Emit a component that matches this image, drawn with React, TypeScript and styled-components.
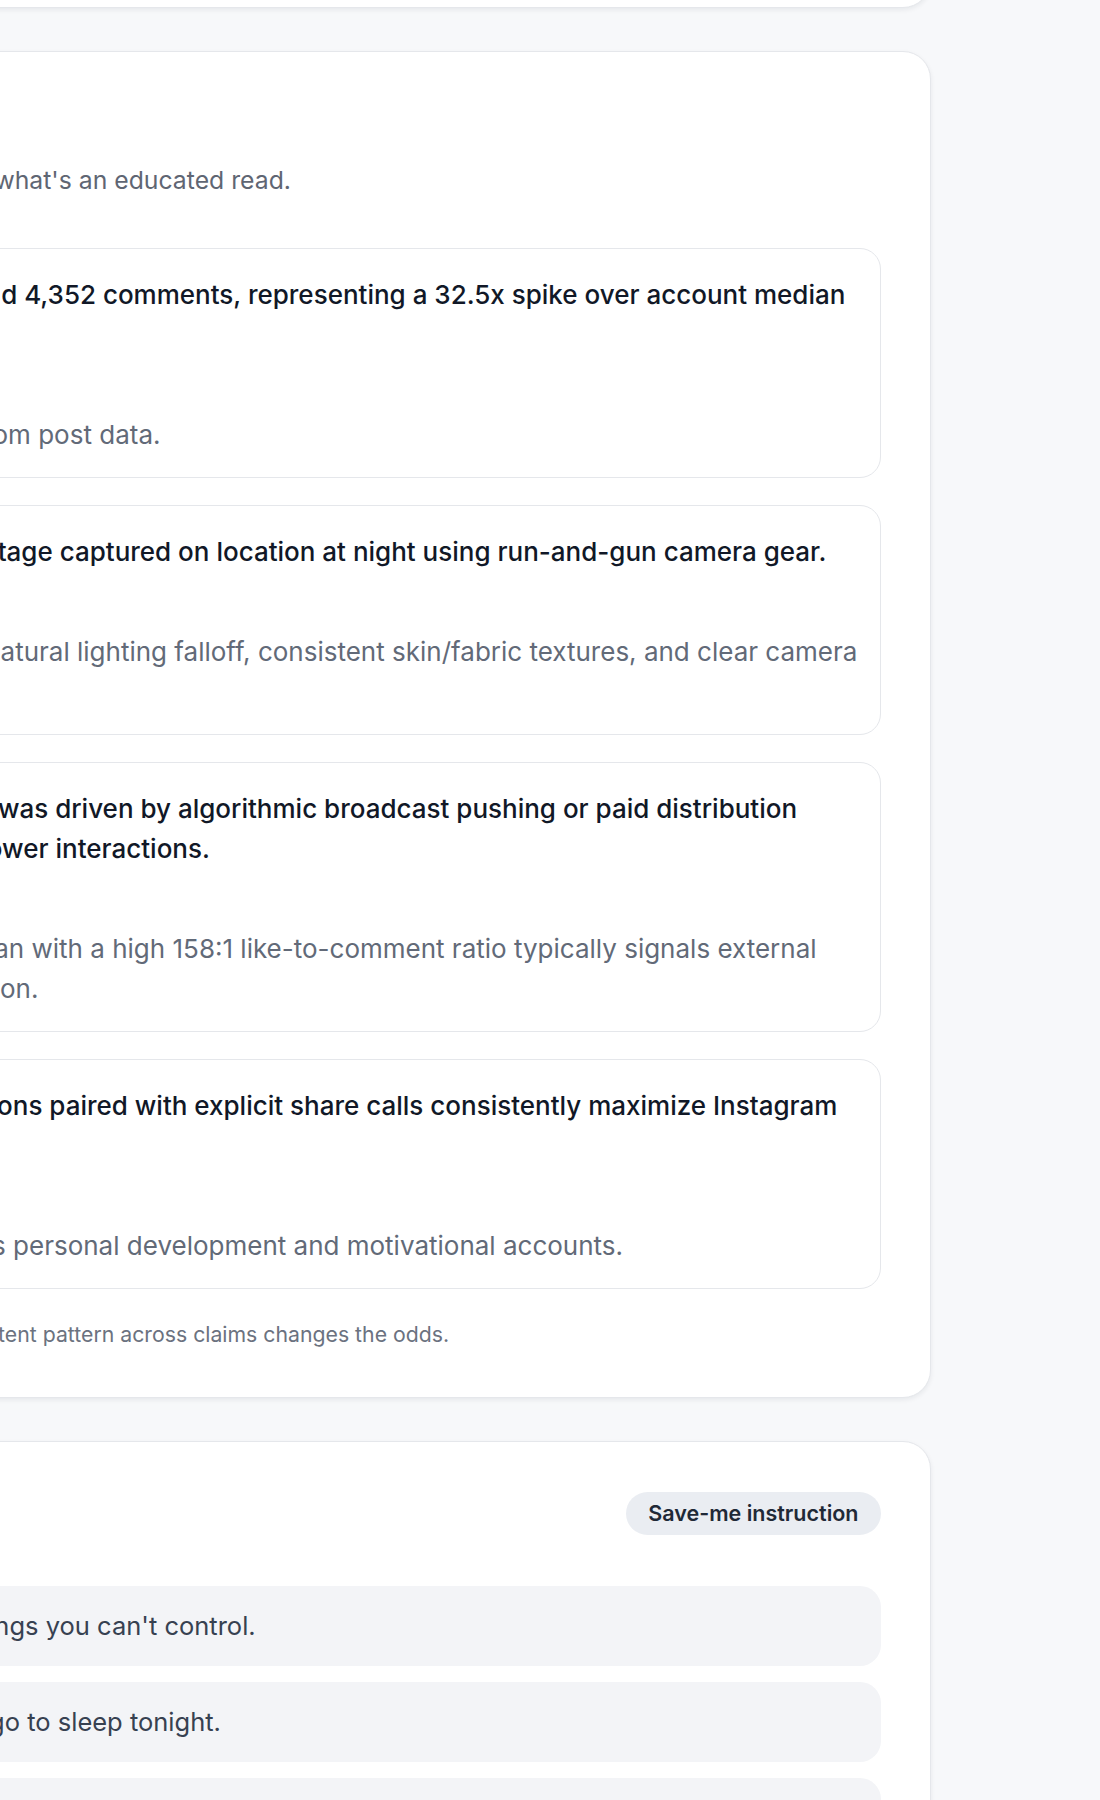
import React from "react";
import styled, { createGlobalStyle } from "styled-components";

const GlobalStyle = createGlobalStyle`
  body {
    margin: 0;
    background: #f7f8fa;
    font-family: Inter, "Noto Sans", sans-serif;
  }
`;

// the view is scrolled: the left part of the column sits outside the window
const Page = styled.main`
  display: flex;
  flex-direction: column;
  gap: 43px;
  width: 1201px;
  margin: -176.5px 0 0 -270px;
  padding-bottom: 40px;
`;

const Panel = styled.section<{ $short?: boolean; $bottom?: number }>`
  background: #ffffff;
  border: 1.5px solid #e5e7eb;
  border-radius: 28px;
  box-shadow: 0 2px 5px rgba(16, 24, 40, 0.07);
  padding: 48px 49.5px ${(p) => p.$bottom ?? 44.5}px;
  height: ${(p) => (p.$short ? "90px" : "auto")};
`;

const Heading = styled.h2`
  margin: 0;
  font-size: 27px;
  line-height: 36px;
  font-weight: 600;
  color: #111827;
`;

const Intro = styled.p`
  margin: 26px 0 0;
  font-size: 24.75px;
  line-height: 36px;
  color: #5f6673;
`;

const ClaimList = styled.div`
  display: flex;
  flex-direction: column;
  gap: 27px;
  margin-top: 49.5px;
`;

const ClaimCard = styled.article`
  border: 1.5px solid #e5e7eb;
  border-radius: 21px;
  padding: 26px 18px 22px 24px;
`;

const ClaimText = styled.p`
  margin: 0;
  font-size: 26px;
  line-height: 40px;
  font-weight: 500;
  color: #111827;
`;

const MetaRow = styled.div`
  display: flex;
  align-items: center;
  height: 36px;
  margin: 12px 0;
`;

const Verdict = styled.span`
  font-size: 16.5px;
  font-weight: 600;
  color: #374151;
  background: #eef0f4;
  border-radius: 999px;
  padding: 6px 14px;
`;

const Evidence = styled.p`
  margin: 0;
  font-size: 26px;
  line-height: 40px;
  color: #626a78;
`;

const Footnote = styled.p`
  margin: 30px 0 0;
  font-size: 21.25px;
  line-height: 30px;
  color: #6b7280;
`;

const HeaderRow = styled.div`
  display: flex;
  justify-content: space-between;
  align-items: flex-start;
`;

const Sub = styled.p`
  margin: 6px 0 0;
  font-size: 21px;
  line-height: 33px;
  color: #6b7280;
`;

const Tag = styled.span`
  margin-top: 1.5px;
  height: 43px;
  display: inline-flex;
  align-items: center;
  padding: 0 22px;
  border-radius: 999px;
  background: #eaedf2;
  color: #1f2937;
  font-size: 21.5px;
  font-weight: 600;
`;

const ActionList = styled.div`
  display: flex;
  flex-direction: column;
  gap: 16px;
  margin-top: 20.5px;
`;

const Action = styled.div`
  background: #f3f4f7;
  border-radius: 21px;
  padding: 20px 24px;
  font-size: 25.5px;
  line-height: 40px;
  color: #374151;
`;

interface IClaim {
  claim: string;
  verdict: string;
  evidence: string;
}

const claims: IClaim[] = [
  {
    claim: "687,616 likes and 4,352 comments, representing a 32.5x spike over account median engagement.",
    verdict: "Verified",
    evidence: "Read directly from post data.",
  },
  {
    claim: "Real candid footage captured on location at night using run-and-gun camera gear.",
    verdict: "Likely",
    evidence: "Frames reveal natural lighting falloff, consistent skin/fabric textures, and clear camera movement.",
  },
  {
    claim: "The view spike was driven by algorithmic broadcast pushing or paid distribution rather than follower interactions.",
    verdict: "Educated read",
    evidence: "Far above median with a high 158:1 like-to-comment ratio typically signals external push or promotion.",
  },
  {
    claim: "Bold-type captions paired with explicit share calls consistently maximize Instagram reach.",
    verdict: "Pattern",
    evidence: "Common across personal development and motivational accounts.",
  },
];

const actions = [
  "Let go of the things you can't control.",
  "Screen off and go to sleep tonight.",
  "Breathe slowly for two minutes.",
];

const App: React.FC = () => {
  return (
    <>
      <GlobalStyle />
      <Page>
        <Panel $short>
          <Heading>Post overview</Heading>
        </Panel>
        <Panel $bottom={48.5}>
          <Heading>Claim check</Heading>
          <Intro>What's known vs. what's an educated read.</Intro>
          <ClaimList>
            {claims.map((c) => (
              <ClaimCard key={c.verdict}>
                <ClaimText>{c.claim}</ClaimText>
                <MetaRow>
                  <Verdict>{c.verdict}</Verdict>
                </MetaRow>
                <Evidence>{c.evidence}</Evidence>
              </ClaimCard>
            ))}
          </ClaimList>
          <Footnote>Put together, a consistent pattern across claims changes the odds.</Footnote>
        </Panel>
        <Panel>
          <HeaderRow>
            <div>
              <Heading>Do this now</Heading>
              <Sub>Pick one.</Sub>
            </div>
            <Tag>Save-me instruction</Tag>
          </HeaderRow>
          <ActionList>
            {actions.map((a) => (
              <Action key={a}>{a}</Action>
            ))}
          </ActionList>
        </Panel>
      </Page>
    </>
  );
};

export default App;
